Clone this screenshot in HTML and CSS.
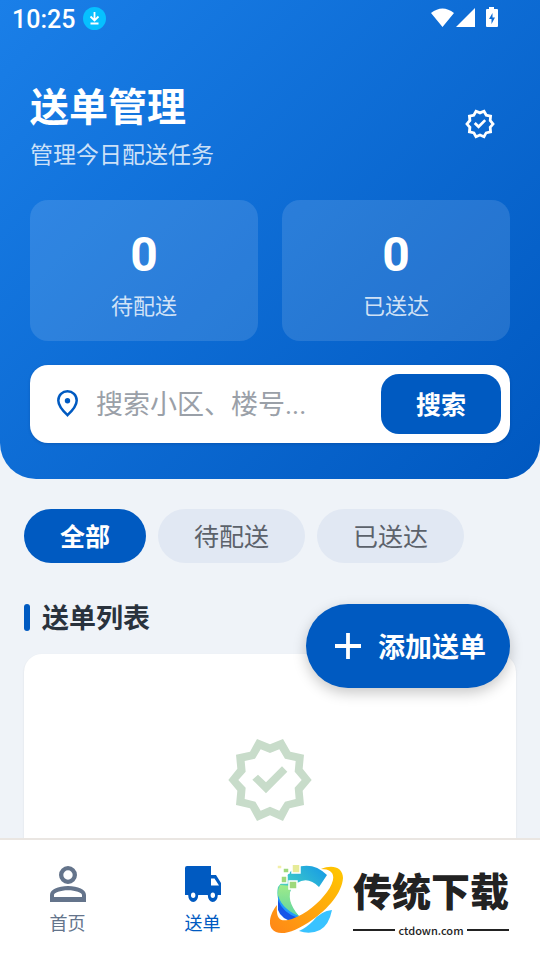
FILE: index.html
```html
<!DOCTYPE html>
<html lang="zh-CN">
<head>
<meta charset="utf-8">
<meta name="viewport" content="width=device-width, initial-scale=1">
<title>送单管理</title>
<link rel="stylesheet" href="styles.css">
</head>
<body>
<svg class="defs" aria-hidden="true">
  <symbol id="verified" viewBox="45 30 270 270">
    <path fill-rule="evenodd" d="M141 42 180 58 219 42 241 80 282 89 278 131 305 165 278 197 282 240 239 250 219 288 180 271 141 288 120 250 78 240 82 197 55 165 82 131 78 89 120 80ZM152 73 135 101 104 108 107 140 85 165 107 188 104 222 136 230 152 257 180 245 208 257 225 230 257 222 254 188 275 165 254 140 257 108 225 101 208 73 180 84ZM127 164 144 149 168 172 216 124 232 140 168 205Z"/>
  </symbol>
</svg>
<div class="app">
  <header class="header">
    <div class="status">
      <span class="clock">10:25</span>
      <svg class="download" viewBox="0 0 23 23" aria-hidden="true">
        <circle cx="11.500" cy="11.500" r="11.500" fill="#06c0ff"/>
        <path d="M11.500 5v8.500M7.500 9.500l4 4 4-4M7.500 16.500h8" fill="none" stroke="#fff" stroke-width="1.800"/>
      </svg>
      <svg class="signals" viewBox="0 0 68 20" aria-hidden="true" fill="#fff">
        <path d="M0 5Q11.500-4 23 5L11.500 19ZM25 19 44 0v19Z"/>
        <path fill-rule="evenodd" d="M58 1V-1h5v2h3q1 0 1 1v16q0 1-1 1H56q-1 0-1-1V2q0-1 1-1ZM61.500 5 58 11h2.500v5L64 9.500h-2.500Z"/>
      </svg>
    </div>
    <div class="heading">
      <div>
        <h1 class="title">送单管理</h1>
        <p class="subtitle">管理今日配送任务</p>
      </div>
      <button class="verify" type="button" aria-label="全部送达"><svg><use href="#verified"/></svg></button>
    </div>
    <div class="stats">
      <div class="stat"><strong class="count">0</strong><span class="stat-label">待配送</span></div>
      <div class="stat"><strong class="count">0</strong><span class="stat-label">已送达</span></div>
    </div>
    <form class="search">
      <svg class="pin" viewBox="0 0 21 27" aria-hidden="true">
        <path d="M10.500 1.300C5.400 1.300 1.300 5.200 1.300 10.500c0 5 4 9.800 9.200 14.700 5.200-4.900 9.200-9.700 9.200-14.700 0-5.300-4.100-9.200-9.200-9.200Z" fill="none" stroke="#005ac1" stroke-width="2.500"/>
        <circle cx="10.500" cy="10.800" r="2.700" fill="#005ac1"/>
      </svg>
      <input class="search-input" type="text" aria-label="搜索" placeholder="搜索小区、楼号...">
      <button class="search-button" type="button">搜索</button>
    </form>
  </header>
  <main class="content">
    <div class="filters">
      <button class="chip active" type="button">全部</button>
      <button class="chip" type="button">待配送</button>
      <button class="chip" type="button">已送达</button>
    </div>
    <h2 class="section-title">送单列表</h2>
    <section class="list">
      <svg class="empty-icon" aria-hidden="true"><use href="#verified"/></svg>
    </section>
    <button class="add" type="button">
      <svg class="plus" viewBox="0 0 26 26" aria-hidden="true"><path d="M13 0v26M0 13h26" stroke="#fff" stroke-width="3.800"/></svg>
      <span>添加送单</span>
    </button>
  </main>
  <nav class="tabs">
    <a class="tab" href="#home">
      <svg viewBox="0 0 36 36" aria-hidden="true"><path fill-rule="evenodd" d="M18 0a9 9 0 1 1 0 18 9 9 0 0 1 0-18Zm0 4.300a4.700 4.700 0 1 0 0 9.400 4.700 4.700 0 0 0 0-9.400ZM0 36v-7c0-5.500 8-9 18-9s18 3.500 18 9v7Zm4-5h28v-2c0-2.200-6.500-4.700-14-4.700S4 26.800 4 29Z"/></svg>
      首页
    </a>
    <a class="tab current" href="#orders">
      <svg viewBox="0 0 36 36" aria-hidden="true"><path fill-rule="evenodd" d="M2 0h24v9h5l5 8v12h-3.200a5 7 0 0 1-10 0H13.200a5 7 0 0 1-10 0H0V2Q0 0 2 0Zm24 12.500v7h8l-4.500-7ZM8.200 26.500a2.200 2.700 0 1 0 0 5.400 2.200 2.700 0 0 0 0-5.400Zm19.600 0a2.200 2.700 0 1 0 0 5.400 2.200 2.700 0 0 0 0-5.400Z"/></svg>
      送单
    </a>
    <div class="brand">
      <svg class="brand-logo" viewBox="0 0 73 70" aria-hidden="true">
        <defs>
          <linearGradient id="arc" x1="0" y1="1" x2="1" y2="0"><stop stop-color="#8ee892"/><stop offset=".5" stop-color="#38c4cc"/><stop offset="1" stop-color="#1497e8"/></linearGradient>
          <linearGradient id="orbit" x1="0" y1="1" x2="1" y2="0"><stop stop-color="#ff8618"/><stop offset="1" stop-color="#ffc800"/></linearGradient>
          <linearGradient id="side" x1="0" y1="0" x2="0" y2="1"><stop stop-color="#a0eb89"/><stop offset="1" stop-color="#60d5a0"/></linearGradient>
        </defs>
        <path fill="url(#arc)" d="M25 3Q43-4 57 10L49 22Q38 11 27 18 17 25 20 37 23 46 29 51L22 52Q4 39 8 22L20 7Z"/>
        <path fill="#239afa" d="M8 27Q9 42 29 51L26 56Q11 52 8 36Z"/>
        <path fill="#1755e8" d="M8 35Q13 48 28 53L24 57Q11 54 8 45Z"/>
        <path fill="url(#side)" d="M10 20 22 21Q15 35 29 51 12 44 8 30 8 24 10 20Z"/>
        <path fill="#39c3ff" d="M62 45Q51 46 43 56 36 63 29 66 40 70 50 65 59 60 62 45Z"/>
        <path fill="url(#orbit)" d="M51 4C62-1 73 2 73 13 72 28 58 44 42 55 24 68 8 72 2 64-3 57 2 46 7 40 6 53 9 58 22 54 36 49 49 38 57 27 67 13 65 4 51 4Z"/>
        <g stroke="#fff" stroke-width="1.500"><path fill="#f3efa8" d="M7 0h5v4H7Z"/><path fill="#9ed87b" d="M13 3h6v5h-6ZM11 11h6v7h-6ZM19 16h8v8h-8Z"/><path fill="#e6eb98" d="M22-1h8v9h-8Z"/></g>
      </svg>
      <div class="brand-text">
        <span class="brand-name">传统下载</span>
        <span class="brand-site">ctdown.com</span>
      </div>
    </div>
  </nav>
</div>
</body>
</html>
```
FILE: styles.css
```css
* { box-sizing: border-box; }
body {
  margin: 0;
  font-family: Roboto, "Noto Sans CJK SC", sans-serif;
  color: #29323d;
  background: #eff3f8;
}
button, input { font: inherit; border: 0; padding: 0; margin: 0; }
svg { display: block; flex: none; }
h1, h2, p { margin: 0; }
.defs { position: absolute; width: 0; height: 0; }
.app { display: flex; flex-direction: column; height: 100vh; }

.header {
  flex: none;
  padding: 0 30px 36px;
  color: #fff;
  background: linear-gradient(135deg, #1a7fe8, #0058c0);
  border-radius: 0 0 36px 36px;
}
.status { display: flex; align-items: center; height: 38px; margin: 0 -18px; }
.clock { font-size: 25px; font-weight: 500; line-height: 36px; padding-top: 2px; }
.download { width: 23px; height: 23px; margin: 0 0 2px 8px; }
.signals { width: 68px; height: 20px; margin: 0 29px 2px auto; overflow: visible; }
.heading { display: flex; justify-content: space-between; align-items: flex-start; padding: 44px 0 28px; }
.title { font-size: 39px; font-weight: 700; line-height: 52px; }
.subtitle { font-size: 23px; line-height: 32px; margin-top: 6px; color: rgba(255, 255, 255, .8); }
.verify { display: grid; place-items: center; width: 60px; height: 60px; margin-top: 12px; color: #fff; background: none; }
.verify svg { width: 32px; height: 32px; fill: currentColor; }
.stats { display: grid; grid-template-columns: 1fr 1fr; gap: 24px; }
.stat {
  display: flex;
  flex-direction: column;
  align-items: center;
  padding: 24px 24px 19px;
  border-radius: 18px;
  background: rgba(255, 255, 255, .12);
}
.count { font-size: 48px; line-height: 62px; font-weight: 700; }
.stat-label { margin-top: 6px; font-size: 22px; line-height: 30px; color: rgba(255, 255, 255, .8); }
.search {
  display: flex;
  align-items: center;
  margin-top: 24px;
  padding: 9px 9px 9px 27px;
  border-radius: 18px;
  background: #fff;
  box-shadow: 0 1px 3px rgba(0, 30, 80, .2);
}
.pin { width: 21px; height: 27px; margin-bottom: 2px; }
.search-input {
  flex: 1;
  min-width: 0;
  height: 60px;
  margin-left: 18px;
  padding-top: 2px;
  font-size: 27px;
  color: #29323d;
  background: none;
}
.search-input::placeholder { color: #9aa0a8; opacity: 1; }
.search-button {
  width: 120px;
  height: 60px;
  padding-bottom: 2px;
  border-radius: 18px;
  font-size: 25px;
  font-weight: 700;
  color: #fff;
  background: #005ac1;
}

.content { position: relative; flex: 1; min-height: 0; overflow: hidden; padding: 30px 24px 0; }
.filters { display: flex; gap: 12px; }
.chip {
  height: 54px;
  padding: 0 36px 2px;
  border-radius: 27px;
  font-size: 25px;
  color: #5c626b;
  background: #e1e8f3;
}
.chip.active { font-weight: 700; color: #fff; background: #005ac1; }
.section-title {
  display: grid;
  grid-template-columns: 6px 1fr;
  align-items: end;
  gap: 12px;
  margin-top: 36px;
  font-size: 27px;
  font-weight: 700;
  line-height: 40px;
}
.section-title::before { content: ""; height: 27px; margin-bottom: 8px; border-radius: 3px; background: #005ac1; }
.list {
  height: 360px;
  margin-top: 15px;
  padding-top: 81px;
  border-radius: 18px;
  background: #fff;
  box-shadow: 0 1px 2px rgba(0, 0, 0, .1);
}
.empty-icon { width: 90px; height: 90px; margin: 0 auto; fill: #c8dcca; }
.add {
  position: absolute;
  right: 30px;
  bottom: 150px;
  display: flex;
  align-items: center;
  gap: 17px;
  height: 84px;
  padding: 0 24px 0 29px;
  border-radius: 42px;
  font-size: 27px;
  font-weight: 700;
  color: #fff;
  background: #005ac1;
  box-shadow: 0 5px 14px rgba(0, 0, 0, .22);
}
.add span { padding-bottom: 2px; }
.plus { width: 26px; height: 26px; }

.tabs {
  flex: none;
  display: grid;
  grid-template-columns: repeat(4, 1fr);
  height: 122px;
  border-top: 2px solid #eae6e2;
  background: #fff;
}
.tab {
  display: flex;
  flex-direction: column;
  align-items: center;
  gap: 9px;
  padding-top: 26px;
  font-size: 18px;
  line-height: 26px;
  color: #64748b;
  text-decoration: none;
}
.tab.current { color: #005ac1; }
.tab svg { width: 36px; height: 36px; fill: currentColor; }
.brand { grid-column: span 2; display: flex; gap: 10px; padding-top: 25px; }
.brand-logo { width: 73px; height: 70px; }
.brand-text { display: flex; flex-direction: column; width: 156px; }
.brand-name { font-size: 39px; font-weight: 900; line-height: 57px; color: #222; white-space: nowrap; }
.brand-site {
  display: flex;
  align-items: center;
  gap: 3px;
  font-family: "Noto Sans CJK SC", sans-serif;
  font-size: 11px;
  font-weight: 500;
  line-height: 16px;
  color: #222;
}
.brand-site::before, .brand-site::after { content: ""; flex: 1; height: 2px; background: #222; }
```
